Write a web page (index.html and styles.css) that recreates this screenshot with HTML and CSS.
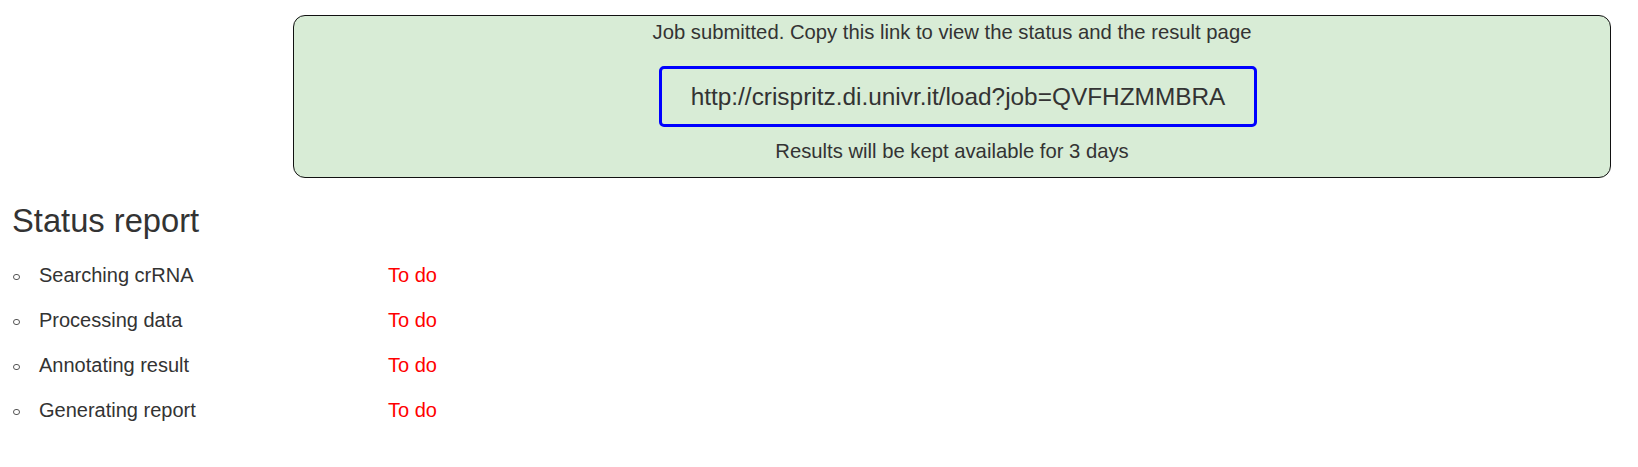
FILE: index.html
```html
<!DOCTYPE html>
<html lang="en">
<head>
<meta charset="utf-8">
<title>Job status</title>
<link rel="stylesheet" href="styles.css">
</head>
<body>
<div class="top-row">
  <div class="job-box">
    <p class="job-msg">Job submitted. Copy this link to view the status and the result page</p>
    <div class="job-link">http://crispritz.di.univr.it/load?job=QVFHZMMBRA</div>
    <p class="job-msg job-keep">Results will be kept available for 3 days</p>
  </div>
</div>
<h2 class="status-title">Status report</h2>
<ul class="status-list">
  <li class="status-item"><span class="step">Searching crRNA</span><span class="state">To do</span></li>
  <li class="status-item"><span class="step">Processing data</span><span class="state">To do</span></li>
  <li class="status-item"><span class="step">Annotating result</span><span class="state">To do</span></li>
  <li class="status-item"><span class="step">Generating report</span><span class="state">To do</span></li>
</ul>
</body>
</html>
```
FILE: styles.css
```css
html, body {
  margin: 0;
  padding: 0;
  background: #ffffff;
}
body {
  font-family: "Liberation Sans", Arial, sans-serif;
  color: #333333;
  font-size: 20px;
  line-height: 1.2;
}
.top-row {
  display: flex;
  padding: 15px 27px 0 293px;
}
.job-box {
  flex: 1;
  display: flex;
  flex-direction: column;
  align-items: center;
  background: #d8ecd6;
  border: 1px solid #111111;
  border-radius: 12px;
  padding: 4px 0 14px 0;
}
.job-msg {
  margin: 0;
  font-size: 20.25px;
  line-height: 24px;
}
.job-link {
  margin: 22px 0 12px 12px;
  width: 592px;
  height: 55px;
  box-sizing: content-box;
  border: 3px solid #0000ff;
  border-radius: 5px;
  font-size: 24.4px;
  line-height: 55px;
  text-align: center;
  white-space: nowrap;
}
.status-title {
  margin: 24px 0 0 0;
  padding-left: 12px;
  font-size: 32.7px;
  font-weight: normal;
  line-height: 38px;
}
.status-list {
  list-style: none;
  margin: 13px 0 0 0;
  padding: 0 0 0 13px;
}
.status-item {
  display: grid;
  grid-template-columns: 26px 349px auto;
  align-items: center;
  height: 45px;
  line-height: 45px;
}
.status-item::before {
  content: "";
  width: 4.5px;
  height: 4.5px;
  border: 1.3px solid #555555;
  border-radius: 50%;
  margin-top: 3px;
}
.state {
  color: #ff0000;
}
```
